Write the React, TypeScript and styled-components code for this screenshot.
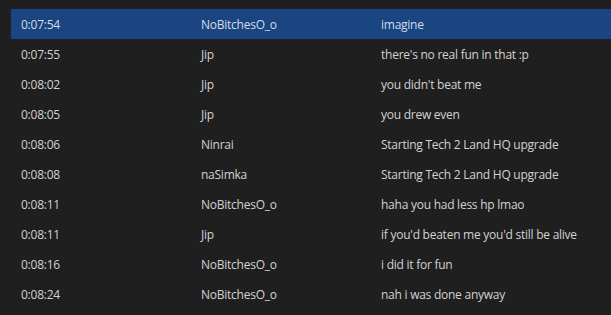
import React from "react";
import styled, { createGlobalStyle } from "styled-components";

const Global = createGlobalStyle`
  html, body { margin: 0; padding: 0; background: #1f1f1f; }
  body { font-family: "Open Sans", "Noto Sans", sans-serif; overflow: hidden; }
`;

const Viewport = styled.div`
  width: 611px;
  height: 315px;
  overflow: hidden;
  background: #1f1f1f;
  display: flex;
  flex-direction: column;
`;

const List = styled.div`
  display: flex;
  flex-direction: column;
  padding-left: 11px;
  padding-top: 9px;
`;

const Row = styled.div<{ $selected?: boolean }>`
  flex: none;
  box-sizing: border-box;
  display: grid;
  grid-template-columns: 180px 180px 1fr;
  align-items: center;
  height: 30px;
  padding-top: 2px;
  background: ${(p) => (p.$selected ? "#1a4580" : "transparent")};
  color: ${(p) => (p.$selected ? "#d2dcea" : "#d2d2d2")};
  font-size: 12px;
  letter-spacing: -0.25px;
  line-height: 16px;
  white-space: nowrap;
`;

const Cell = styled.div`
  padding-left: 10px;
  overflow: hidden;
`;

type Msg = { t: string; who: string; text: string };

const rows: Msg[] = [
  { t: "0:07:54", who: "NoBitchesO_o", text: "imagine" },
  { t: "0:07:55", who: "Jip", text: "there's no real fun in that :p" },
  { t: "0:08:02", who: "Jip", text: "you didn't beat me" },
  { t: "0:08:05", who: "Jip", text: "you drew even" },
  { t: "0:08:06", who: "Ninrai", text: "Starting Tech 2 Land HQ upgrade" },
  { t: "0:08:08", who: "naSimka", text: "Starting Tech 2 Land HQ upgrade" },
  { t: "0:08:11", who: "NoBitchesO_o", text: "haha you had less hp lmao" },
  { t: "0:08:11", who: "Jip", text: "if you'd beaten me you'd still be alive" },
  { t: "0:08:16", who: "NoBitchesO_o", text: "i did it for fun" },
  { t: "0:08:24", who: "NoBitchesO_o", text: "nah i was done anyway" },
];

export default function App() {
  return (
    <Viewport>
      <Global />
      <List>
        {rows.map((r, i) => (
          <Row key={i} $selected={i === 0}>
            <Cell>{r.t}</Cell>
            <Cell>{r.who}</Cell>
            <Cell>{r.text}</Cell>
          </Row>
        ))}
      </List>
    </Viewport>
  );
}
